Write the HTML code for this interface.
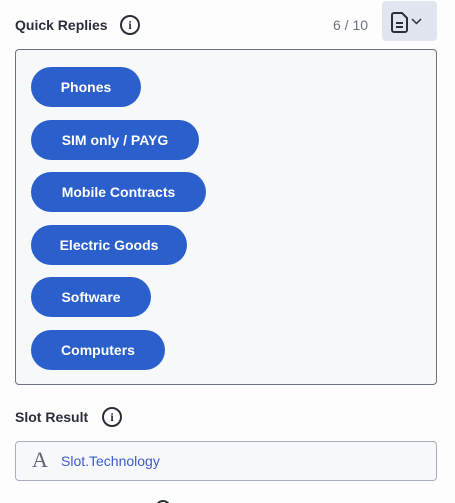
<!DOCTYPE html>
<html style="overflow:hidden;height:503px"><head><style>
body{margin:0;width:455px;height:503px;background:#fdfdfe;font-family:"Liberation Sans",sans-serif;position:relative;overflow:hidden}
.lbl{position:absolute;font-weight:bold;font-size:14px;color:#2b2f3a}
.info{position:absolute;width:16px;height:16px;border:2px solid #2b2f3a;border-radius:50%;font:bold 12px "Liberation Serif",serif;text-align:center;line-height:16px;color:#2b2f3a}
.box{position:absolute;left:15px;top:49px;width:420px;height:334px;border:1px solid #6b7280;border-radius:4px;background:#f7f8fa}
.pill{position:absolute;left:31px;height:40px;border-radius:20px;background:#2b5fcb;color:#fff;font-weight:bold;font-size:14px;line-height:40px;text-align:center}
</style></head><body>
<div class="lbl" style="left:15px;top:17px">Quick Replies</div>
<div class="info" style="left:120px;top:15px">i</div>
<div style="position:absolute;left:333px;top:17px;font-size:14px;color:#6b7280">6 / 10</div>
<div style="position:absolute;left:382px;top:1px;width:55px;height:40px;background:#e1e5ef;border-radius:4px">
<svg width="55" height="40" viewBox="0 0 55 40"><path d="M12 12h8l5 5v12a2 2 0 0 1-2 2h-11a2 2 0 0 1-2-2v-15a2 2 0 0 1 2-2z" fill="none" stroke="#2b2f3a" stroke-width="2"/><path d="M14 22h7M14 26h7" stroke="#2b2f3a" stroke-width="2"/><path d="M30 18l4.5 4.5 4.5-4.5" fill="none" stroke="#2b2f3a" stroke-width="1.5"/></svg></div>
<div class="box"></div>
<div class="pill" style="top:67px;width:110px">Phones</div>
<div class="pill" style="top:120px;width:168px">SIM only / PAYG</div>
<div class="pill" style="top:172px;width:175px">Mobile Contracts</div>
<div class="pill" style="top:225px;width:156px">Electric Goods</div>
<div class="pill" style="top:277px;width:120px">Software</div>
<div class="pill" style="top:330px;width:134px">Computers</div>
<div class="lbl" style="left:15px;top:409px">Slot Result</div>
<div class="info" style="left:102px;top:407px">i</div>
<div style="position:absolute;left:15px;top:441px;width:420px;height:38px;border:1px solid #a7aebd;border-radius:4px;background:#f7f8fb">
<span style="position:absolute;left:16px;top:5px;font:22px 'Liberation Serif',serif;color:#5f6470">A</span>
<span style="position:absolute;left:45px;top:11px;font-size:14px;color:#3b5bcc">Slot.Technology</span></div>
<div style="position:absolute;left:155px;top:500px;width:12px;height:12px;border:2px solid #2b2f3a;border-radius:50%"></div>
</body></html>
